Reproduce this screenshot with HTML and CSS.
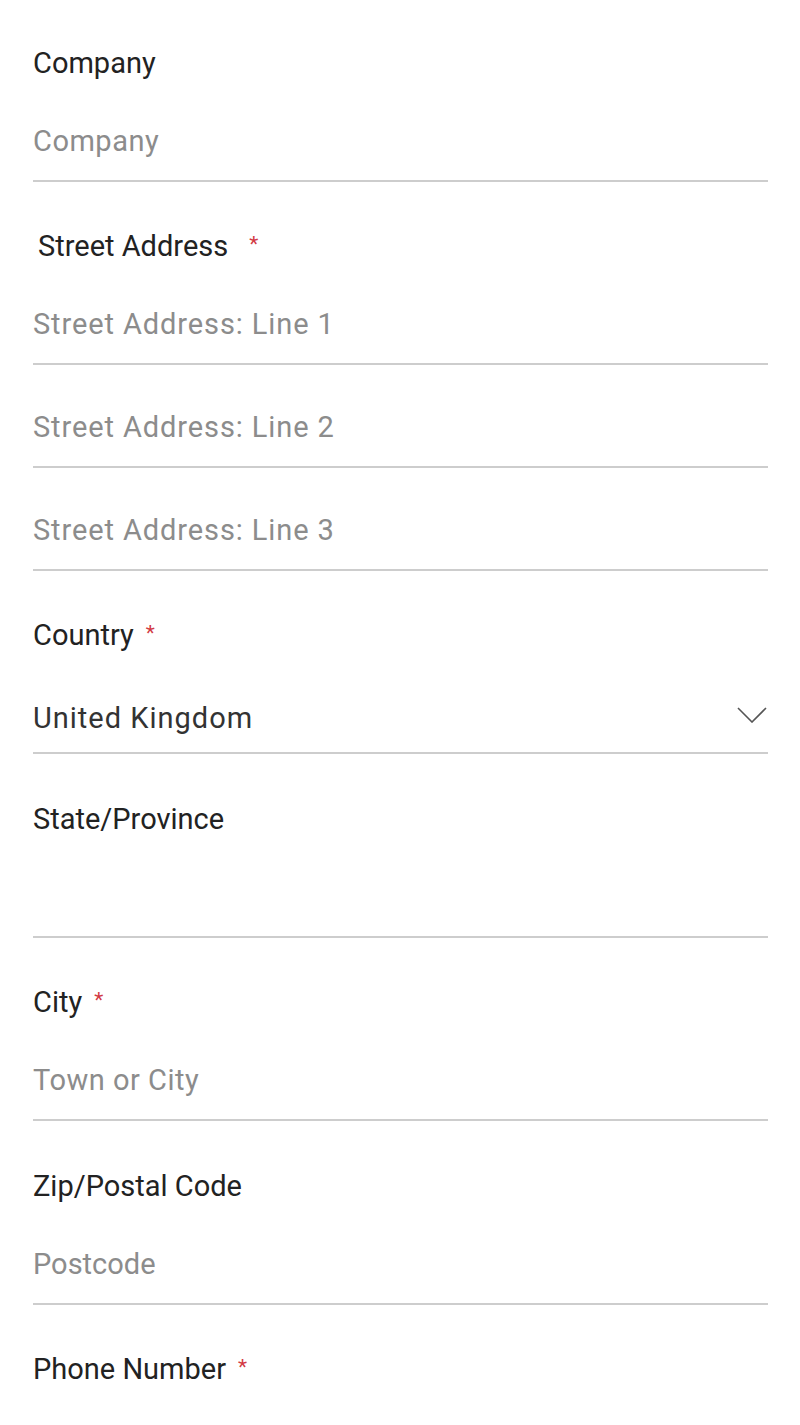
FILE: index.html
```html
<!DOCTYPE html>
<html lang="en">
<head>
<meta charset="utf-8">
<title>Address form</title>
<link rel="stylesheet" href="styles.css">
</head>
<body>
<form class="form">
  <div class="field">
    <div class="label">Company</div>
    <div class="input"><span class="ph">Company</span></div>
  </div>
  <div class="field">
    <div class="label label-street">Street Address<span class="req req-wide">*</span></div>
    <div class="input"><span class="ph ph-wide">Street Address: Line 1</span></div>
    <div class="input"><span class="ph ph-wide">Street Address: Line 2</span></div>
    <div class="input"><span class="ph ph-wide">Street Address: Line 3</span></div>
  </div>
  <div class="field">
    <div class="label">Country<span class="req">*</span></div>
    <div class="input select">
      <span class="value">United Kingdom</span>
      <svg class="chevron" width="30" height="16" viewBox="0 0 30 16" aria-hidden="true"><path d="M1 1 L15 15 L29 1" fill="none" stroke="#555" stroke-width="1.6"/></svg>
    </div>
  </div>
  <div class="field field-tall">
    <div class="label">State/Province</div>
    <div class="input"><span class="ph"></span></div>
  </div>
  <div class="field">
    <div class="label">City<span class="req">*</span></div>
    <div class="input"><span class="ph">Town or City</span></div>
  </div>
  <div class="field field-tall">
    <div class="label">Zip/Postal Code</div>
    <div class="input"><span class="ph ph-tight">Postcode</span></div>
  </div>
  <div class="field">
    <div class="label">Phone Number<span class="req">*</span></div>
  </div>
</form>
</body>
</html>
```
FILE: styles.css
```css
html, body {
  margin: 0;
  padding: 0;
  background: #fff;
}
body {
  font-family: Roboto, "Liberation Sans", Arial, sans-serif;
  width: 800px;
  height: 1425px;
  overflow: hidden;
}
.form {
  padding: 0 32px 0 33px;
}
.field-tall {
  padding-top: 1px;
}
.field:first-child .label {
  padding-top: 43px;
}
.label {
  padding-top: 44px;
  height: 40px;
  line-height: 40px;
  font-size: 29px;
  color: #222;
  display: flex;
  align-items: center;
}
.label-street {
  padding-left: 5px;
}
.req {
  color: #d23a44;
  font-size: 21px;
  margin-left: 12px;
  margin-top: -4px;
}
.req-wide {
  margin-left: 21px;
}
.input {
  padding-top: 38px;
  padding-bottom: 19px;
  height: 40px;
  line-height: 40px;
  border-bottom: 2px solid #cdcdcd;
  font-size: 29px;
  display: flex;
  align-items: center;
  justify-content: space-between;
}
.input + .input {
  padding-top: 42px;
}
.ph {
  color: #8c8c8c;
  letter-spacing: 0.5px;
}
.ph-wide {
  letter-spacing: 0.9px;
}
.ph-tight {
  letter-spacing: 0;
}
.select {
  padding-top: 43px;
  padding-bottom: 14px;
}
.value {
  color: #333;
  letter-spacing: 1px;
}
.chevron {
  margin-right: 1px;
  margin-top: -6px;
}
```
